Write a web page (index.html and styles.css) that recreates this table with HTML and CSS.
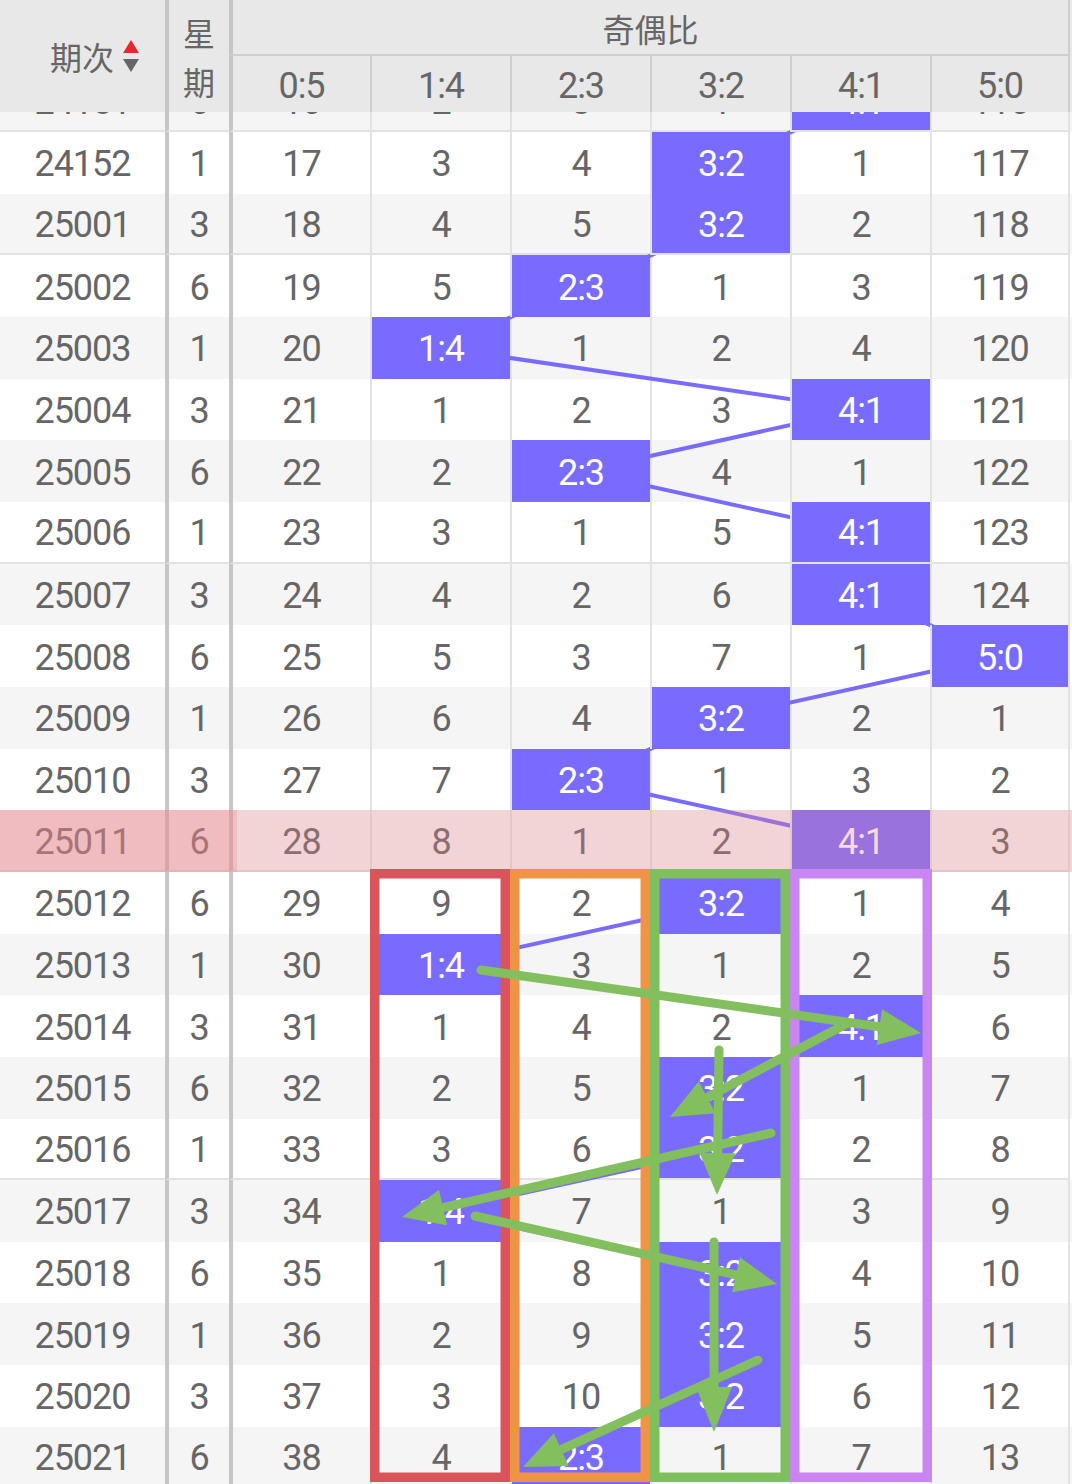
FILE: index.html
```html
<!DOCTYPE html>
<html lang="zh">
<head>
<meta charset="utf-8">
<title>奇偶比走势</title>
<link rel="stylesheet" href="styles.css">
</head>
<body>
<div class="sheet">
  <div class="head">
    <div class="h-id"><span>期次</span>
      <svg class="sort" width="16" height="32" viewBox="0 0 16 32"><polygon points="8,0 16,13 0,13" fill="#e8262e"/><polygon points="0,19 16,19 8,32" fill="#666"/></svg>
    </div>
    <div class="h-wk"><span>星</span><span>期</span></div>
    <div class="h-group">奇偶比</div>
    <div class="h-col first">0:5</div>
    <div class="h-col">1:4</div>
    <div class="h-col">2:3</div>
    <div class="h-col">3:2</div>
    <div class="h-col">4:1</div>
    <div class="h-col last">5:0</div>
  </div>

  <div class="body">
   <div class="rows">
    <div class="row g sep"><div class="c">24151</div><div class="c">6</div><div class="c">16</div><div class="c">2</div><div class="c">3</div><div class="c">1</div><div class="c hl">4:1</div><div class="c">116</div></div>
    <div class="row"><div class="c">24152</div><div class="c">1</div><div class="c">17</div><div class="c">3</div><div class="c">4</div><div class="c hl">3:2</div><div class="c">1</div><div class="c">117</div></div>
    <div class="row g sep"><div class="c">25001</div><div class="c">3</div><div class="c">18</div><div class="c">4</div><div class="c">5</div><div class="c hl">3:2</div><div class="c">2</div><div class="c">118</div></div>
    <div class="row"><div class="c">25002</div><div class="c">6</div><div class="c">19</div><div class="c">5</div><div class="c hl">2:3</div><div class="c">1</div><div class="c">3</div><div class="c">119</div></div>
    <div class="row g"><div class="c">25003</div><div class="c">1</div><div class="c">20</div><div class="c hl">1:4</div><div class="c">1</div><div class="c">2</div><div class="c">4</div><div class="c">120</div></div>
    <div class="row"><div class="c">25004</div><div class="c">3</div><div class="c">21</div><div class="c">1</div><div class="c">2</div><div class="c">3</div><div class="c hl">4:1</div><div class="c">121</div></div>
    <div class="row g"><div class="c">25005</div><div class="c">6</div><div class="c">22</div><div class="c">2</div><div class="c hl">2:3</div><div class="c">4</div><div class="c">1</div><div class="c">122</div></div>
    <div class="row sep"><div class="c">25006</div><div class="c">1</div><div class="c">23</div><div class="c">3</div><div class="c">1</div><div class="c">5</div><div class="c hl">4:1</div><div class="c">123</div></div>
    <div class="row g"><div class="c">25007</div><div class="c">3</div><div class="c">24</div><div class="c">4</div><div class="c">2</div><div class="c">6</div><div class="c hl">4:1</div><div class="c">124</div></div>
    <div class="row"><div class="c">25008</div><div class="c">6</div><div class="c">25</div><div class="c">5</div><div class="c">3</div><div class="c">7</div><div class="c">1</div><div class="c hl">5:0</div></div>
    <div class="row g"><div class="c">25009</div><div class="c">1</div><div class="c">26</div><div class="c">6</div><div class="c">4</div><div class="c hl">3:2</div><div class="c">2</div><div class="c">1</div></div>
    <div class="row"><div class="c">25010</div><div class="c">3</div><div class="c">27</div><div class="c">7</div><div class="c hl">2:3</div><div class="c">1</div><div class="c">3</div><div class="c">2</div></div>
    <div class="row g sep pink"><div class="c">25011</div><div class="c">6</div><div class="c">28</div><div class="c">8</div><div class="c">1</div><div class="c">2</div><div class="c hl">4:1</div><div class="c">3</div></div>
    <div class="row"><div class="c">25012</div><div class="c">6</div><div class="c">29</div><div class="c">9</div><div class="c">2</div><div class="c hl">3:2</div><div class="c">1</div><div class="c">4</div></div>
    <div class="row g"><div class="c">25013</div><div class="c">1</div><div class="c">30</div><div class="c hl">1:4</div><div class="c">3</div><div class="c">1</div><div class="c">2</div><div class="c">5</div></div>
    <div class="row"><div class="c">25014</div><div class="c">3</div><div class="c">31</div><div class="c">1</div><div class="c">4</div><div class="c">2</div><div class="c hl">4:1</div><div class="c">6</div></div>
    <div class="row g"><div class="c">25015</div><div class="c">6</div><div class="c">32</div><div class="c">2</div><div class="c">5</div><div class="c hl">3:2</div><div class="c">1</div><div class="c">7</div></div>
    <div class="row sep"><div class="c">25016</div><div class="c">1</div><div class="c">33</div><div class="c">3</div><div class="c">6</div><div class="c hl">3:2</div><div class="c">2</div><div class="c">8</div></div>
    <div class="row g"><div class="c">25017</div><div class="c">3</div><div class="c">34</div><div class="c hl">1:4</div><div class="c">7</div><div class="c">1</div><div class="c">3</div><div class="c">9</div></div>
    <div class="row"><div class="c">25018</div><div class="c">6</div><div class="c">35</div><div class="c">1</div><div class="c">8</div><div class="c hl">3:2</div><div class="c">4</div><div class="c">10</div></div>
    <div class="row g"><div class="c">25019</div><div class="c">1</div><div class="c">36</div><div class="c">2</div><div class="c">9</div><div class="c hl">3:2</div><div class="c">5</div><div class="c">11</div></div>
    <div class="row"><div class="c">25020</div><div class="c">3</div><div class="c">37</div><div class="c">3</div><div class="c">10</div><div class="c hl">3:2</div><div class="c">6</div><div class="c">12</div></div>
    <div class="row g sep"><div class="c">25021</div><div class="c">6</div><div class="c">38</div><div class="c">4</div><div class="c hl">2:3</div><div class="c">1</div><div class="c">7</div><div class="c">13</div></div>
   </div>
  </div>

  <svg class="trend" width="1072" height="1484" viewBox="0 0 1072 1484">
    <polyline fill="none" stroke="#7a6bff" stroke-width="4" stroke-linejoin="round"
      points="861,101.2 721,162.8 721,224.5 581,286.2 441,347.8 861,409.5 581,471.2 861,532.8 861,594.5 1000,656.2 721,717.8 581,779.5 861,841.2 721,902.8 441,964.5 861,1026.2 721,1087.8 721,1149.5 441,1211.2 721,1272.8 721,1334.5 721,1396.2 581,1457.8"/>
  </svg>

  <svg class="marks" width="1072" height="1484" viewBox="0 0 1072 1484">
    <g fill="none" stroke-width="9.5">
      <rect x="374.75" y="873.75" width="130.5" height="603.5" stroke="#da545b"/>
      <rect x="514.75" y="873.75" width="130.5" height="603.5" stroke="#ef9445"/>
      <rect x="654.75" y="873.75" width="130.5" height="603.5" stroke="#80bf5e"/>
      <rect x="794.75" y="873.75" width="132.5" height="603.5" stroke="#c985f2"/>
    </g>
    <g stroke="#83bf5e" stroke-width="9" stroke-linecap="round" fill="#83bf5e">
      <line x1="481" y1="970" x2="881" y2="1027"/>
      <polygon stroke="none" points="921,1033 876.9,1044.9 882,1009.2"/>
      <line x1="848" y1="1023" x2="708" y2="1097"/>
      <polygon stroke="none" points="670,1117 698.7,1081.5 715.6,1113.3"/>
      <line x1="719" y1="1050" x2="717.6" y2="1155"/>
      <polygon stroke="none" points="717,1195 699.6,1152.8 735.6,1153.2"/>
      <line x1="771" y1="1133" x2="443" y2="1207.7"/>
      <polygon stroke="none" points="402,1217 439,1190.1 447,1225.2"/>
      <line x1="475" y1="1216" x2="736" y2="1274.8"/>
      <polygon stroke="none" points="777,1284 732.1,1292.3 740,1257.2"/>
      <line x1="714" y1="1242" x2="714" y2="1390"/>
      <polygon stroke="none" points="714,1432 696,1387 732,1387"/>
      <line x1="758" y1="1360" x2="561" y2="1449.6"/>
      <polygon stroke="none" points="523,1467 553.8,1433.2 568.7,1466"/>
    </g>
  </svg>
</div>
</body>
</html>
```

FILE: styles.css
```css
html, body {
  margin: 0;
  padding: 0;
  background: #fff;
}

.sheet {
  position: relative;
  z-index: 0;
  width: 1072px;
  height: 1484px;
  overflow: hidden;
  background: #fff;
  color: #666;
  font-family: Roboto, "Noto Sans", "Noto Sans CJK SC", sans-serif;
}

/* ---------- header ---------- */
.head {
  position: relative;
  z-index: 5;
  display: grid;
  grid-template-columns: 165px 64px 141px 140px 140px 140px 140px 140px 2px;
  grid-template-rows: 56px 56px;
  background: #e8e8e8;
  font-family: "Noto Sans CJK SC", "Noto Sans", sans-serif;
  font-size: 32px;
  line-height: 1;
}

.h-id {
  grid-row: 1 / 3;
  grid-column: 1;
  display: flex;
  align-items: center;
  gap: 9px;
  padding-left: 50px;
}

.h-id .sort {
  display: block;
}

.h-wk {
  grid-row: 1 / 3;
  grid-column: 2;
  border-left: 4px solid #c6c6c6;
  display: flex;
  flex-direction: column;
  align-items: center;
  justify-content: center;
  gap: 17px;
}

.h-group {
  grid-row: 1;
  grid-column: 3 / 9;
  border-left: 4px solid #c6c6c6;
  border-right: 2px solid #cfcfcf;
  border-bottom: 2px solid #cfcfcf;
  display: flex;
  align-items: center;
  justify-content: center;
  padding-top: 2px;
}

.h-col {
  grid-row: 2;
  border-left: 2px solid #cfcfcf;
  display: flex;
  align-items: center;
  justify-content: center;
  font-family: Roboto, "Noto Sans", sans-serif;
  font-size: 36px;
  letter-spacing: -1px;
  padding-top: 3px;
}

.h-col.first {
  border-left: 4px solid #c6c6c6;
}

.h-col.last {
  border-right: 2px solid #cfcfcf;
}

/* ---------- body (scrolled list, clipped under header) ---------- */
.body {
  height: 1372px;
  overflow: hidden;
}

.rows {
  margin-top: -41.667px;
}

.row {
  display: grid;
  grid-template-columns: 165px 64px 141px 140px 140px 140px 140px 140px 2px;
  height: 61.667px;
  font-size: 36px;
  letter-spacing: -1px;
}

.row.g {
  background: #f5f5f5;
}

.c {
  box-sizing: border-box;
  display: flex;
  align-items: center;
  justify-content: center;
  padding-top: 3px;
  border-left: 2px solid #e2e2e2;
  white-space: nowrap;
}

.c:first-child {
  border-left: 0;
}

.c:nth-child(2),
.c:nth-child(3) {
  border-left: 4px solid #c6c6c6;
}

.c:last-child {
  border-right: 2px solid #e2e2e2;
}

.sep .c {
  border-bottom: 2px solid #e2e2e2;
}

.c.hl {
  position: relative;
  z-index: 2;
  background: #7a6bff;
  background-clip: padding-box;
  color: #fff;
}

/* highlighted (current) row */
.row.pink {
  position: relative;
}

.row.pink::after,
.row.pink::before {
  content: "";
  position: absolute;
  top: 0;
  bottom: 0;
  left: 0;
  z-index: 3;
  background: rgba(235, 132, 139, 0.29);
  pointer-events: none;
}

.row.pink::after {
  right: 0;
}

.row.pink::before {
  width: 237px;
}

/* ---------- overlays ---------- */
.trend,
.marks {
  position: absolute;
  top: 0;
  left: 0;
  pointer-events: none;
}

.trend {
  z-index: 1;
}

.marks {
  z-index: 4;
}
```
